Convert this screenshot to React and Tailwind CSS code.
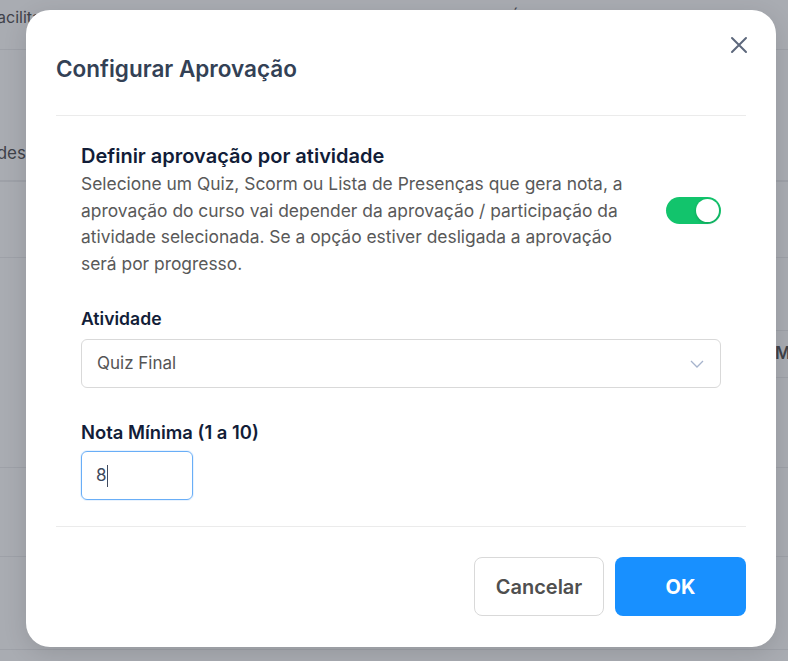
import React from "react";

function BgRow({ h, children, className = "" }) {
  return (
    <div className={`border-b border-[#9ea1a8] ${className}`} style={{ height: h }}>
      {children}
    </div>
  );
}

export default function App() {
  return (
    <div className="relative w-[788px] h-[661px] overflow-hidden bg-[#a9acb2] font-['Inter',sans-serif]">
      {/* background page (under overlay) */}
      <div className="flex flex-col text-[#3f424a]">
        <div className="h-[50px] border-b border-[#9ea1a8] flex items-start pt-[5px] text-[16px] leading-[24px]">
          <span className="ml-[-12px] w-[183px]">Facilitador</span>
          <span className="w-[156px]">Inscrições</span>
          <span className="w-[183px]">Certificação</span>
          <span>Édição</span>
        </div>
        <div className="h-[132px] border-b-2 border-[#9ea1a8] flex items-end pb-[14px] text-[17px]">
          <span className="ml-[-58px]">Atividades</span>
        </div>
        <BgRow h={76} />
        <div className="h-[72px] flex">
          <div className="flex-1" />
          <div className="w-[16px] h-[72px]" />
        </div>
        <div className="h-[48px] flex justify-end">
          <div className="w-[14px] border-y border-[#9ea1a8] flex items-center text-[17px] font-semibold overflow-hidden">
            <span className="pl-[1px]">M</span>
          </div>
        </div>
        <BgRow h={90} />
        <BgRow h={89} />
        <BgRow h={93} />
      </div>

      {/* modal */}
      <div className="absolute left-[26px] top-[10px] w-[750px] h-[637px] bg-white rounded-[24px] shadow-[0_6px_24px_rgba(0,0,0,0.12)] px-[30px] flex flex-col">
        <button className="absolute right-[19px] top-[17px] w-[36px] h-[36px] flex items-center justify-center text-[#5d687c]">
          <svg width="18" height="18" viewBox="0 0 18 18" fill="none" stroke="currentColor" strokeWidth="2" strokeLinecap="round">
            <path d="M2 2 L16 16 M16 2 L2 16" />
          </svg>
        </button>

        <div className="pt-[45px] pb-[32px] border-b border-[#ebebeb]">
          <h2 className="text-[22.5px] leading-[28px] font-semibold text-[#334155]">Configurar Aprovação</h2>
        </div>

        <div className="px-[25px] pt-[27px] pb-[26px] border-b border-[#ebebeb] flex flex-col">
          <div className="flex items-center justify-between">
            <div className="flex flex-col gap-[2px]">
              <div className="text-[20px] leading-[26px] font-semibold text-[#121d38]">Definir aprovação por atividade</div>
              <p className="text-[17.4px] leading-[26.5px] text-[#595959]">
                <span className="block">Selecione um Quiz, Scorm ou Lista de Presenças que gera nota, a</span>
                <span className="block">aprovação do curso vai depender da aprovação / participação da</span>
                <span className="block">atividade selecionada. Se a opção estiver desligada a aprovação</span>
                <span className="block">será por progresso.</span>
              </p>
            </div>
            <div className="w-[55px] h-[27px] rounded-full bg-[#12c46c] flex items-center justify-end pr-[2px]">
              <div className="w-[23px] h-[23px] rounded-full bg-white shadow-[0_1px_3px_rgba(0,0,0,0.2)]" />
            </div>
          </div>

          <label className="mt-[30px] text-[17.6px] leading-[24px] font-semibold text-[#121d38]">Atividade</label>
          <div className="mt-[8px] h-[49px] border border-[#d9d9d9] rounded-[6px] flex items-center justify-between pl-[15px] pr-[16px]">
            <span className="text-[17px] text-[#555555]">Quiz Final</span>
            <svg width="14" height="8" viewBox="0 0 14 8" fill="none" stroke="#a6b3cc" strokeWidth="1.3">
              <path d="M1 1 L7 7 L13 1" />
            </svg>
          </div>

          <label className="mt-[32px] text-[18.4px] leading-[24px] font-semibold text-[#121d38]">Nota Mínima (1 a 10)</label>
          <div className="mt-[7px] w-[112px] h-[49px] border border-[#69aef7] rounded-[6px] flex items-center pl-[14px] shadow-[0_0_0_1px_rgba(105,174,247,0.15)]">
            <span className="text-[17px] text-[#3f4a5e]">8</span>
            <span className="w-[1px] h-[22px] bg-[#3f4a5e]" />
          </div>
        </div>

        <div className="flex justify-end gap-[11px] pt-[30px]">
          <button className="w-[130px] h-[59px] rounded-[8px] border border-[#d9d9d9] bg-white text-[20px] font-semibold text-[#4f4f4f]">Cancelar</button>
          <button className="w-[131px] h-[59px] rounded-[8px] bg-[#1890ff] text-[20px] font-bold text-white">OK</button>
        </div>
      </div>
    </div>
  );
}
